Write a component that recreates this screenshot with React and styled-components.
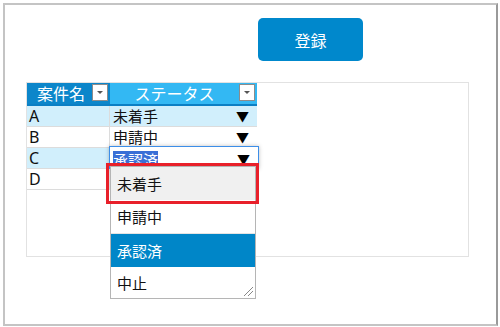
import React from 'react';
import styled, { createGlobalStyle } from 'styled-components';

const GlobalStyle = createGlobalStyle`
  html, body {
    margin: 0;
    padding: 0;
    background: #fff;
  }
  body {
    font-family: "Noto Sans", "Noto Sans CJK JP", sans-serif;
  }
`;

const Frame = styled.div`
  box-sizing: border-box;
  width: 495px;
  height: 323px;
  margin: 3px 0 0 3px;
  border: 2px solid #c4c4c4;
  border-right-color: #9a9a9a;
  padding: 13px 0 0 21px;
`;

const Toolbar = styled.div`
  display: flex;
  padding-left: 232px;
  margin-bottom: 21px;
`;

const Button = styled.button`
  width: 105px;
  height: 43px;
  border: none;
  border-radius: 5px;
  background: #0088cc;
  color: #fff;
  font-family: "Noto Sans CJK JP", sans-serif;
  font-size: 16px;
  cursor: pointer;
`;

const Panel = styled.div`
  box-sizing: border-box;
  width: 443px;
  height: 175px;
  border: 1px solid #e2e2e2;
`;

const Grid = styled.div`
  display: grid;
  grid-template-columns: 83px 147px;
  font-family: "Noto Sans", "Noto Sans CJK JP", sans-serif;
  font-size: 15px;
`;

const HeadCell = styled.div`
  position: relative;
  height: 21px;
  display: flex;
  align-items: center;
  justify-content: ${p => (p.$center ? 'center' : 'flex-start')};
  padding-left: ${p => (p.$center ? '0' : '10px')};
  padding-right: ${p => (p.$center ? '18px' : '0')};
  background: ${p => p.$bg};
  border-bottom: 2px solid #0b7fc4;
  color: #fff;
  font-family: "Noto Sans CJK JP", sans-serif;
  font-size: 16px;
  line-height: 21px;
  box-sizing: content-box;
`;

const FilterButton = styled.span`
  position: absolute;
  right: 2px;
  top: 1px;
  box-sizing: border-box;
  width: 16px;
  height: 17px;
  background: #fff;
  border: 1px solid #8c8c8c;
  display: flex;
  align-items: center;
  justify-content: center;

  &::after {
    content: '';
    border-left: 3px solid transparent;
    border-right: 3px solid transparent;
    border-top: 3px solid #555;
  }
`;

const Cell = styled.div`
  position: relative;
  box-sizing: border-box;
  height: 21px;
  padding-left: ${p => (p.$name ? '2px' : '3px')};
  background: ${p => (p.$alt ? '#d1effc' : '#fff')};
  border-bottom: 1px solid #dcdcdc;
  border-right: ${p => (p.$name ? '1px solid #dcdcdc' : 'none')};
  display: flex;
  align-items: center;
  justify-content: space-between;
  font-size: ${p => (p.$name ? '16px' : '15px')};
  line-height: 20px;
  color: #111;
`;

const Arrow = styled.span`
  font-size: 13px;
  margin-right: 8px;
  color: #000;
`;

const Editor = styled.div`
  position: absolute;
  left: -1px;
  right: -2px;
  top: -2px;
  height: 23px;
  box-sizing: border-box;
  border: 1px solid #3d8ee8;
  background: #fff;
  box-shadow: 0 0 4px rgba(0, 0, 0, 0.25);
  display: flex;
  align-items: flex-start;
  justify-content: space-between;
  padding: 4px 0 0 3px;
  z-index: 1;
`;

const Selected = styled.span`
  background: #3a6fd6;
  color: #fff;
  line-height: 18px;
`;

const EditorArrow = styled(Arrow)`
  line-height: 16px;
`;

const ListBox = styled.div`
  position: absolute;
  left: 0;
  top: 18px;
  width: 146px;
  box-sizing: border-box;
  border: 1px solid #b5b5b5;
  background: #fff;
  z-index: 2;
`;

const Option = styled.div`
  height: ${p => p.$h || 33}px;
  display: flex;
  align-items: center;
  padding-left: 6px;
  background: ${p => (p.$active ? '#0086c8' : p.$hover ? '#f0f0f0' : '#fff')};
  color: ${p => (p.$active ? '#fff' : '#111')};
  border-bottom: ${p => (p.$line ? '1px solid #e4e4e4' : 'none')};
  font-family: "Noto Sans CJK JP", sans-serif;
  font-size: 15px;
`;

const Grip = styled.svg`
  position: absolute;
  right: 1px;
  bottom: 1px;
`;

const Highlight = styled.div`
  position: absolute;
  left: -4px;
  top: 15px;
  width: 153px;
  height: 41px;
  box-sizing: border-box;
  border: 3px solid #e8202a;
  z-index: 3;
`;

const rows = [
  { name: 'A', status: '未着手', alt: true },
  { name: 'B', status: '申請中', alt: false },
  { name: 'C', status: '承認済', alt: true, editing: true },
  { name: 'D', status: '', alt: false },
];

const options = ['未着手', '申請中', '承認済', '中止'];

const App = () => {
  return (
    <>
      <GlobalStyle />
      <Frame>
        <Toolbar>
          <Button>登録</Button>
        </Toolbar>
        <Panel>
          <Grid>
            <HeadCell $bg="#0c86ca">
              案件名
              <FilterButton />
            </HeadCell>
            <HeadCell $bg="#33b8f3" $center>
              ステータス
              <FilterButton />
            </HeadCell>
            {rows.map(row => (
              <React.Fragment key={row.name}>
                <Cell $name $alt={row.alt}>{row.name}</Cell>
                {row.editing ? (
                  <Cell>
                    <Editor>
                      <Selected>{row.status}</Selected>
                      <EditorArrow>▼</EditorArrow>
                    </Editor>
                    <ListBox>
                      {options.map((opt, i) => (
                        <Option
                          key={opt}
                          $hover={i === 0}
                          $active={i === 2}
                          $line={i === 1}
                          $h={i === 3 ? 31 : 33}
                        >
                          {opt}
                        </Option>
                      ))}
                      <Grip width="12" height="12" viewBox="0 0 12 12">
                        <path d="M11 2 L2 11 M11 6 L6 11" stroke="#888" strokeWidth="1" fill="none" />
                      </Grip>
                    </ListBox>
                    <Highlight />
                  </Cell>
                ) : (
                  <Cell $alt={row.alt}>
                    {row.status}
                    {row.status && <Arrow>▼</Arrow>}
                  </Cell>
                )}
              </React.Fragment>
            ))}
          </Grid>
        </Panel>
      </Frame>
    </>
  );
};

export default App;
